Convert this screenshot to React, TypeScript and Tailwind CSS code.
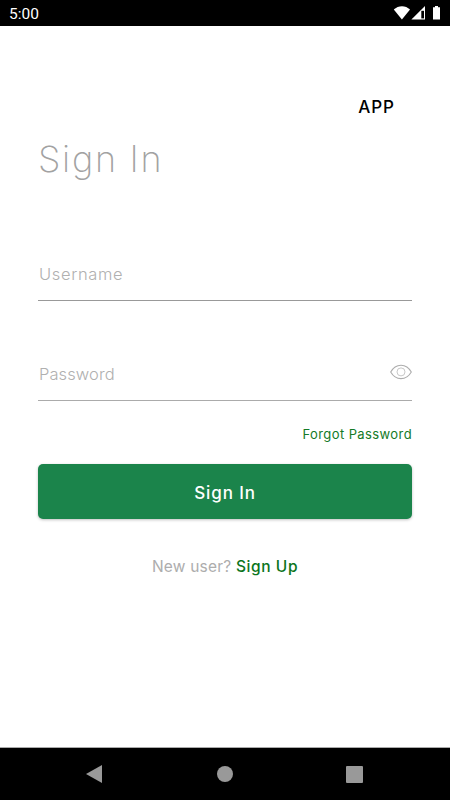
import React, { useState } from "react";

interface FieldProps {
  label: string;
  type: string;
  className: string;
  children?: React.ReactNode;
}

function EyeIcon() {
  return (
    <svg width="22" height="16" viewBox="0 0 22 16" fill="none" stroke="#adadad">
      <path d="M0.7 8C3.2 3.4 6.8 1.2 11 1.2S18.8 3.4 21.3 8C18.8 12.4 15.2 14.6 11 14.6S3.2 12.4 0.7 8Z" strokeWidth="1.1" />
      <circle cx="11" cy="7.9" r="4" stroke="#c8c8c8" />
    </svg>
  );
}

function StatusBar() {
  return (
    <div className="flex h-[26px] items-center justify-between bg-black pl-[9px] pr-2 text-white">
      <span className="pt-[3px] font-[Roboto,sans-serif] text-[15.5px] leading-none">5:00</span>
      <svg width="50" height="16" viewBox="0 0 50 16" fill="white">
        <path d="M1.8 4.6C6.4.1 13.6.1 18 4.6L9.9 14.4Z" />
        <path d="M33 1V14.6H19.4Z" />
        <path d="M29.3 5.8H32V13.4H29.3Z" fill="black" />
        <path d="M43 1.1H46V2.2H48V14.6H41V2.2H43Z" />
      </svg>
    </div>
  );
}

function Field({ label, type, className, children }: FieldProps) {
  return (
    <div className={`flex h-[54px] items-center border-b ${className}`}>
      <input
        type={type}
        placeholder={label}
        className="w-0 flex-1 bg-transparent pt-px font-light outline-none placeholder:text-[#b0b0b0]"
      />
      {children}
    </div>
  );
}

export default function App() {
  const [showPassword, setShowPassword] = useState(false);

  return (
    <div className="flex h-[800px] w-[450px] flex-col bg-white font-[Inter,sans-serif]">
      <StatusBar />

      {/* Sign in form */}
      <main className="flex flex-1 flex-col px-[38px]">
        <div className="mt-[70px] flex h-6 items-center justify-end pr-[17px] text-[17px] font-medium tracking-[1px] text-black">
          APP
        </div>
        <h1 className="mt-[15px] h-12 text-[36px] font-extralight leading-[48px] tracking-[1.7px] text-[#a2a2a2]">
          Sign In
        </h1>

        <Field
          label="Username"
          type="text"
          className="mt-[64px] border-[#999] pl-px text-[16.5px] tracking-[0.65px]"
        />
        <Field
          label="Password"
          type={showPassword ? "text" : "password"}
          className="mt-[46px] border-[#ababab] pl-px text-[16.5px] tracking-[0.1px]"
        >
          <button
            type="button"
            aria-label="Show password"
            className="pb-[3px]"
            onClick={() => setShowPassword(!showPassword)}
          >
            <EyeIcon />
          </button>
        </Field>

        <a className="mt-[23px] self-end text-[13px] leading-5 tracking-[0.4px] text-[#137a27]">
          Forgot Password
        </a>

        <button
          type="button"
          className="mt-[20px] h-[55px] shrink-0 rounded-[5px] bg-[#1b844b] pt-[4px] text-[17px] font-medium tracking-[0.9px] text-white shadow-[0_1px_3px_rgba(0,0,0,0.25)]"
        >
          Sign In
        </button>

        <p className="mt-[36px] text-center text-[15.5px] leading-6 tracking-[0.2px] text-[#adadad]">
          New user? <a className="font-medium tracking-[0.6px] text-[#0c751c]">Sign Up</a>
        </p>
      </main>

      {/* System navigation */}
      <nav className="flex h-[53px] items-center justify-between border-t border-[#aaa] bg-black pl-[86px] pr-[87px]">
        <svg width="17" height="18" viewBox="0 0 17 18" fill="#999">
          <path d="M0 9L16 0V18Z" />
        </svg>
        <span className="size-4 rounded-full bg-[#999]" />
        <span className="size-[17px] rounded-[1px] bg-[#999]" />
      </nav>
    </div>
  );
}
